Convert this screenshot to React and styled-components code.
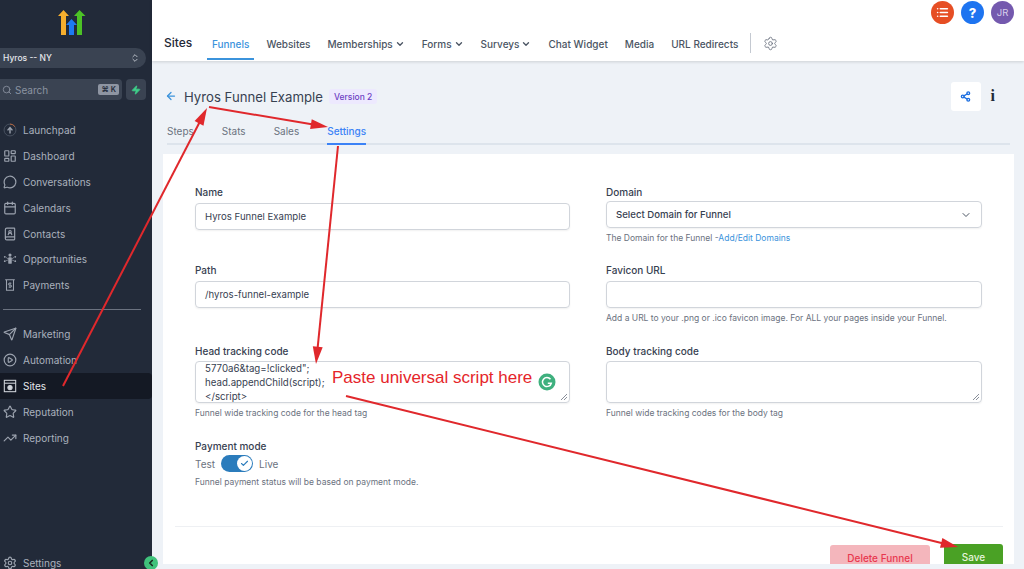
import React from 'react';
import styled, { createGlobalStyle } from 'styled-components';
import {
  Search, Zap, LayoutDashboard, MessageCircle, Calendar, BookUser, Send, CirclePlay, Star,
  TrendingUp, Settings as Gear, ChevronDown, ChevronsUpDown, Share2, List, ArrowLeft, Check, ChevronLeft,
} from 'lucide-react';

const GlobalStyle = createGlobalStyle`
  html, body { margin: 0; padding: 0; height: 569px; overflow: hidden; }
  body { font-family: Inter, "Liberation Sans", sans-serif; color: #374151; background: #eef2f7; }
  * { box-sizing: border-box; }
`;

const Page = styled.div`
  position: relative;
  display: flex;
  width: 1024px;
  height: 569px;
  overflow: hidden;
`;

const Sidebar = styled.aside`
  flex: 0 0 152px;
  height: 569px;
  background: #222a39;
  display: flex;
  flex-direction: column;
  overflow: hidden;
  & > * { flex-shrink: 0; }
`;

const Logo = styled.svg`
  display: block;
  margin: 9px 0 0 57px;
`;

const Switcher = styled.div`
  margin: 12px 6px 0 0;
  height: 20px;
  border-radius: 0 10px 10px 0;
  background: #3a4352;
  color: #e5e7eb;
  font-size: 8.5px;
  font-weight: 500;
  display: flex;
  align-items: center;
  justify-content: space-between;
  padding: 0 6px 0 3px;
`;

const SearchRow = styled.div`
  display: flex;
  gap: 4px;
  margin: 11px 6px 0 0;
`;

const SearchBox = styled.div`
  flex: 1;
  height: 21px;
  background: #3a4352;
  border-radius: 0 4px 4px 0;
  color: #8b93a1;
  font-size: 10px;
  display: flex;
  align-items: center;
  gap: 3px;
  padding: 0 3px 0 2px;
`;

const Kbd = styled.span`
  margin-left: auto;
  background: #8e95a2;
  color: #222a39;
  font-size: 7.5px;
  font-weight: 600;
  border-radius: 2px;
  padding: 1px 3px;
`;

const BoltButton = styled.div`
  width: 20px;
  height: 21px;
  border-radius: 4px;
  background: #3a4352;
  display: flex;
  align-items: center;
  justify-content: center;
`;

const NavList = styled.nav`
  display: flex;
  flex-direction: column;
  margin-top: ${(p) => p.$top}px;
`;

const NavItem = styled.div`
  height: 25.9px;
  display: flex;
  align-items: center;
  gap: 6px;
  padding-left: 3px;
  font-size: 10px;
  color: ${(p) => (p.$active ? '#e5e7eb' : '#aab1bd')};
  background: ${(p) => (p.$active ? '#141924' : 'transparent')};
  border-radius: 0 4px 4px 0;
  svg { flex: none; width: 14px; height: 14px; color: ${(p) => (p.$active ? '#d1d5db' : '#9ca3af')}; }
`;

const NavDivider = styled.hr`
  margin: 11px 11px 0 3px;
  border: 0;
  border-top: 1px solid #6b7280;
`;

const Main = styled.main`
  flex: 1;
  min-width: 0;
  display: flex;
  flex-direction: column;
`;

const Header = styled.header`
  height: 61px;
  flex: none;
  background: #fff;
  box-shadow: 0 1px 3px rgba(0, 0, 0, 0.14);
  display: flex;
  flex-direction: column;
  padding: 1px 10px 0 12px;
`;

const TopIcons = styled.div`
  display: flex;
  justify-content: flex-end;
  gap: 7px;
  height: 23px;
`;

const RoundIcon = styled.div`
  width: 23px;
  height: 23px;
  border-radius: 50%;
  background: ${(p) => p.$bg};
  color: ${(p) => p.$color || '#fff'};
  font-size: ${(p) => p.$size || 9.5}px;
  font-weight: ${(p) => p.$weight || 400};
  display: flex;
  align-items: center;
  justify-content: center;
`;

const NavBar = styled.div`
  flex: 1;
  display: flex;
  align-items: stretch;
`;

const SectionTitle = styled.h1`
  margin: 0 9px 0 0;
  font-size: 12px;
  font-weight: 500;
  line-height: 37px;
  color: #1f2937;
  width: 34px;
`;

const TopTabs = styled.div`
  display: flex;
  gap: 7px;
`;

const TopTab = styled.div`
  display: flex;
  align-items: center;
  gap: 2px;
  padding: 5px 5px 0;
  height: 36px;
  font-size: 10px;
  font-weight: 500;
  color: ${(p) => (p.$active ? '#3b93dc' : '#4b5563')};
  border-bottom: 2px solid ${(p) => (p.$active ? '#3b93dc' : 'transparent')};
`;

const GearWrap = styled.div`
  display: flex;
  align-items: center;
  height: 20px;
  margin: 9px 0 0 7px;
  padding-left: 12px;
  border-left: 1px solid #c4c9d1;
  color: #6b7280;
`;

const Content = styled.div`
  flex: 1;
  padding: 20px 10px 0 11px;
  min-height: 0;
`;

const TitleRow = styled.div`
  display: flex;
  align-items: center;
  height: 30px;
  padding-left: 2px;
`;

const PageTitle = styled.h2`
  margin: 2px 6px 0 7px;
  font-size: 13.2px;
  font-weight: 400;
  color: #374151;
`;

const Badge = styled.span`
  background: #ede9fe;
  color: #6d3fc4;
  font-size: 8.5px;
  font-weight: 500;
  padding: 2.5px 5px;
  margin-top: 1px;
  border-radius: 3px;
`;

const ShareButton = styled.div`
  margin-left: auto;
  width: 30px;
  height: 29px;
  background: #fff;
  border-radius: 3px;
  color: #1d6fe0;
  display: flex;
  align-items: center;
  justify-content: center;
`;

const InfoGlyph = styled.span`
  font-family: "Liberation Serif", serif;
  font-size: 16px;
  font-weight: 700;
  color: #1f2937;
  margin: 0 19px 0 10px;
`;

const SubTabs = styled.div`
  display: flex;
  gap: 28px;
  height: 27px;
  margin: 7px 4px 0 4px;
  border-bottom: 2px solid #dde4ec;
`;

const SubTab = styled.div`
  font-size: 10px;
  line-height: 26px;
  height: 27px;
  font-weight: ${(p) => (p.$active ? 500 : 400)};
  color: ${(p) => (p.$active ? '#3b82f6' : '#6b7280')};
  border-bottom: 2px solid ${(p) => (p.$active ? '#3b82f6' : 'transparent')};
`;

const Card = styled.section`
  margin-top: 9px;
  height: 410px;
  background: #fff;
  overflow: hidden;
  padding: 32px 11px 0 12px;
`;

const FormGrid = styled.div`
  display: grid;
  grid-template-columns: 375px 376px;
  column-gap: 36px;
  padding: 0 20px;
  height: 340px;
`;

const Column = styled.div`
  display: flex;
  flex-direction: column;
`;

const Field = styled.div`
  height: ${(p) => p.$h}px;
`;

const Label = styled.label`
  display: block;
  font-size: 10px;
  font-weight: 450;
  line-height: 12px;
  color: #374151;
  margin-bottom: ${(p) => p.$gap}px;
`;

const Input = styled.div`
  height: 27px;
  border: 1px solid #d1d5db;
  border-radius: 4px;
  box-shadow: 0 1px 2px rgba(0, 0, 0, 0.06);
  font-size: 9.6px;
  color: #374151;
  display: flex;
  align-items: center;
  justify-content: space-between;
  padding: 0 9px;
  font-weight: ${(p) => (p.$select ? 450 : 400)};
  svg { color: #4b5563; }
`;

const TextArea = styled.div`
  position: relative;
  height: 42px;
  border: 1px solid #d1d5db;
  border-radius: 4px;
  box-shadow: 0 1px 2px rgba(0, 0, 0, 0.06);
  font-size: 9.7px;
  line-height: 14px;
  color: #374151;
  padding: 0 9px;
  overflow: hidden;
`;

const Grip = styled.svg`
  position: absolute;
  right: 1px;
  bottom: 1px;
`;

const Help = styled.p`
  margin: 5px 0 0;
  font-size: 8.5px;
  line-height: 11px;
  color: #6b7280;
  a { color: #3b93dc; text-decoration: none; }
`;

const ModeRow = styled.div`
  display: flex;
  align-items: center;
  gap: 6px;
  font-size: 10px;
  color: #6b7280;
  height: 17px;
`;

const Toggle = styled.div`
  width: 32px;
  height: 17px;
  border-radius: 9px;
  background: #2b7cbc;
  display: flex;
  align-items: center;
  justify-content: flex-end;
  padding-right: 1px;
`;

const Knob = styled.div`
  width: 15px;
  height: 15px;
  border-radius: 50%;
  background: #fff;
  color: #2b7cbc;
  display: flex;
  align-items: center;
  justify-content: center;
`;

const Footer = styled.div`
  border-top: 1px solid #eef0f3;
  display: flex;
  justify-content: flex-end;
  gap: 14px;
  padding-top: 17px;
`;

const Button = styled.div`
  height: 26px;
  width: ${(p) => p.$w}px;
  border-radius: 3px;
  background: ${(p) => p.$bg};
  color: ${(p) => p.$color};
  font-size: 10px;
  font-weight: 500;
  display: flex;
  align-items: center;
  justify-content: center;
  margin-top: ${(p) => p.$top || 0}px;
`;

const Arrows = styled.svg`
  position: absolute;
  inset: 0;
  pointer-events: none;
`;

const Note = styled.div`
  position: absolute;
  left: 332px;
  top: 369px;
  font-family: "Liberation Sans", Arial, sans-serif;
  font-size: 17px;
  line-height: 18px;
  color: #e5252a;
  white-space: nowrap;
`;

const GrammarlyMark = styled.svg`
  position: absolute;
  left: 538px;
  top: 373px;
`;

const CollapseDot = styled.div`
  position: absolute;
  left: 144px;
  top: 556px;
  width: 14px;
  height: 14px;
  border-radius: 50%;
  background: #3fc27b;
  color: #1a2a22;
  display: flex;
  align-items: center;
  justify-content: center;
`;

const LaunchIcon = () => (
  <svg viewBox="0 0 16 16" fill="none" stroke="currentColor" strokeWidth="1">
    <circle cx="8" cy="8" r="6.8" stroke="#4b5563" />
    <path d="M8 1.2a6.8 6.8 0 0 1 5.6 3" stroke="#c2693a" />
    <path d="M8 12V6M5.2 8.4 8 5.2l2.8 3.2" strokeWidth="1.6" />
  </svg>
);

const OpportunityIcon = () => (
  <svg viewBox="0 0 16 16" fill="currentColor">
    <circle cx="8" cy="3.5" r="1.8" />
    <rect x="6" y="6" width="4" height="7.5" rx="1" />
    <circle cx="2" cy="5.5" r="1" /><circle cx="14" cy="5.5" r="1" />
    <circle cx="2" cy="10.5" r="1" /><circle cx="14" cy="10.5" r="1" />
    <path d="M3 5.8 6 8M13 5.8 10 8M3 10.2 6 9M13 10.2 10 9" stroke="currentColor" strokeWidth=".7" />
  </svg>
);

const PaymentIcon = () => (
  <svg viewBox="0 0 16 16" fill="none" stroke="currentColor" strokeWidth="1.2">
    <path d="M2.5 2h11M4 2v12h8V2" />
    <path d="M9.6 6H7.2a1 1 0 0 0 0 2.2h1.6a1 1 0 0 1 0 2.2H6.4M8 5v6.4" strokeWidth="1" />
  </svg>
);

const SitesIcon = () => (
  <svg viewBox="0 0 16 16" fill="none" stroke="currentColor" strokeWidth="1.2">
    <rect x="1.5" y="1.5" width="13" height="13" />
    <path d="M1.5 4.8h13" />
    <circle cx="8" cy="9.8" r="2.4" fill="currentColor" />
  </svg>
);

const mainNav = [
  ['Launchpad', <LaunchIcon key="l" />],
  ['Dashboard', <LayoutDashboard key="d" />],
  ['Conversations', <MessageCircle key="c" />],
  ['Calendars', <Calendar key="ca" />],
  ['Contacts', <BookUser key="co" />],
  ['Opportunities', <OpportunityIcon key="o" />],
  ['Payments', <PaymentIcon key="p" />],
];

const toolNav = [
  ['Marketing', <Send key="m" />],
  ['Automation', <CirclePlay key="a" />],
  ['Sites', <SitesIcon key="s" />, true],
  ['Reputation', <Star key="r" />],
  ['Reporting', <TrendingUp key="re" />],
];

const topTabs = [
  ['Funnels', false, true],
  ['Websites'],
  ['Memberships', true],
  ['Forms', true],
  ['Surveys', true],
  ['Chat Widget'],
  ['Media'],
  ['URL Redirects'],
];

const subTabs = ['Steps', 'Stats', 'Sales', 'Settings'];

const Arrow = ({ x1, y1, x2, y2 }) => {
  const a = Math.atan2(y2 - y1, x2 - x1);
  const len = 18;
  const spread = 0.28;
  const p1 = [x2 - len * Math.cos(a - spread), y2 - len * Math.sin(a - spread)];
  const p2 = [x2 - len * Math.cos(a + spread), y2 - len * Math.sin(a + spread)];
  const bx = x2 - (len - 3) * Math.cos(a);
  const by = y2 - (len - 3) * Math.sin(a);
  return (
    <g>
      <line x1={x1} y1={y1} x2={bx} y2={by} stroke="#e0282c" strokeWidth="2" />
      <polygon points={`${x2},${y2} ${p1[0]},${p1[1]} ${p2[0]},${p2[1]}`} fill="#e0282c" />
    </g>
  );
};

export default function App() {
  return (
    <Page>
      <GlobalStyle />
      <Sidebar>
        <Logo width="30" height="27" viewBox="0 0 30 27">
          <path d="M1 7 L6.500 1 L12 7 H9 V26 H4 V7 Z" fill="#f6ae2d" />
          <path d="M9 16 L14.500 10 L20 16 H17 V26 H12 V16 Z" fill="#1d7bf2" />
          <path d="M17 7 L22.500 1 L28.500 7 H25 V26 H20 V7 Z" fill="#4cc226" />
        </Logo>
        <Switcher>
          Hyros -- NY
          <ChevronsUpDown size={10} color="#cbd0d8" />
        </Switcher>
        <SearchRow>
          <SearchBox>
            <Search size={10} />
            Search
            <Kbd>⌘ K</Kbd>
          </SearchBox>
          <BoltButton>
            <Zap size={10} color="#3fd08a" fill="#3fd08a" />
          </BoltButton>
        </SearchRow>
        <NavList $top={17}>
          {mainNav.map(([label, icon]) => (
            <NavItem key={label}>{icon}{label}</NavItem>
          ))}
        </NavList>
        <NavDivider />
        <NavList $top={11}>
          {toolNav.map(([label, icon, active]) => (
            <NavItem key={label} $active={active}>{icon}{label}</NavItem>
          ))}
        </NavList>
        <NavList $top={99}>
          <NavItem><Gear />Settings</NavItem>
        </NavList>
      </Sidebar>

      <Main>
        <Header>
          <TopIcons>
            <RoundIcon $bg="#e64e24"><List size={13} strokeWidth={3} /></RoundIcon>
            <RoundIcon $bg="#1e74f0" $weight={800} $size={13}>?</RoundIcon>
            <RoundIcon $bg="#7459ae" $color="#d9d0ec">JR</RoundIcon>
          </TopIcons>
          <NavBar>
            <SectionTitle>Sites</SectionTitle>
            <TopTabs>
              {topTabs.map(([label, hasMenu, active]) => (
                <TopTab key={label} $active={active}>
                  {label}
                  {hasMenu && <ChevronDown size={10} strokeWidth={3.2} />}
                </TopTab>
              ))}
            </TopTabs>
            <GearWrap><Gear size={15} strokeWidth={1.4} /></GearWrap>
          </NavBar>
        </Header>

        <Content>
          <TitleRow>
            <ArrowLeft size={12} color="#3b93dc" strokeWidth={2.5} />
            <PageTitle>Hyros Funnel Example</PageTitle>
            <Badge>Version 2</Badge>
            <ShareButton><Share2 size={11} strokeWidth={3} /></ShareButton>
            <InfoGlyph>i</InfoGlyph>
          </TitleRow>
          <SubTabs>
            {subTabs.map((t) => (
              <SubTab key={t} $active={t === 'Settings'}>{t}</SubTab>
            ))}
          </SubTabs>
          <Card>
            <FormGrid>
              <Column>
                <Field $h={78}>
                  <Label $gap={5}>Name</Label>
                  <Input>Hyros Funnel Example</Input>
                </Field>
                <Field $h={81}>
                  <Label $gap={5}>Path</Label>
                  <Input>/hyros-funnel-example</Input>
                </Field>
                <Field $h={95}>
                  <Label $gap={4}>Head tracking code</Label>
                  <TextArea>
                    5770a6&amp;tag=!clicked";<br />
                    head.appendChild(script);<br />
                    &lt;/script&gt;
                    <Grip width="8" height="8" viewBox="0 0 8 8">
                      <path d="M1 7 7 1M4 7 7 4" stroke="#6b7280" strokeWidth=".8" />
                    </Grip>
                  </TextArea>
                  <Help>Funnel wide tracking code for the head tag</Help>
                </Field>
                <Field $h={60}>
                  <Label $gap={3}>Payment mode</Label>
                  <ModeRow>
                    Test
                    <Toggle><Knob><Check size={9} strokeWidth={3} /></Knob></Toggle>
                    Live
                  </ModeRow>
                  <Help>Funnel payment status will be based on payment mode.</Help>
                </Field>
              </Column>
              <Column>
                <Field $h={78}>
                  <Label $gap={3}>Domain</Label>
                  <Input $select>
                    Select Domain for Funnel
                    <ChevronDown size={12} />
                  </Input>
                  <Help>The Domain for the Funnel -<a href="#domains">Add/Edit Domains</a></Help>
                </Field>
                <Field $h={81}>
                  <Label $gap={5}>Favicon URL</Label>
                  <Input />
                  <Help>Add a URL to your .png or .ico favicon image. For ALL your pages inside your Funnel.</Help>
                </Field>
                <Field $h={95}>
                  <Label $gap={4}>Body tracking code</Label>
                  <TextArea>
                    <Grip width="8" height="8" viewBox="0 0 8 8">
                      <path d="M1 7 7 1M4 7 7 4" stroke="#6b7280" strokeWidth=".8" />
                    </Grip>
                  </TextArea>
                  <Help>Funnel wide tracking codes for the body tag</Help>
                </Field>
              </Column>
            </FormGrid>
            <Footer>
              <Button $w={100} $bg="#f4b6bc" $color="#e8384f" $top={1}>Delete Funnel</Button>
              <Button $w={59} $bg="#4aa125" $color="#e6f4dd">Save</Button>
            </Footer>
          </Card>
        </Content>
      </Main>

      <CollapseDot><ChevronLeft size={10} strokeWidth={4} /></CollapseDot>
      <Note>Paste universal script here</Note>
      <GrammarlyMark width="18" height="18" viewBox="0 0 18 18">
        <circle cx="9" cy="9" r="8.500" fill="#3eb07e" />
        <path d="M12.500 6.300A4.500 4.500 0 1 0 13.300 10.200H9.800" fill="none" stroke="#fff" strokeWidth="1.500" />
      </GrammarlyMark>
      <Arrows width="1024" height="569" viewBox="0 0 1024 569">
        <Arrow x1={63} y1={386} x2={207} y2={108} />
        <Arrow x1={209} y1={107} x2={328} y2={127} />
        <Arrow x1={338} y1={146} x2={316} y2={364} />
        <Arrow x1={346} y1={396} x2={958} y2={547} />
      </Arrows>
    </Page>
  );
}
